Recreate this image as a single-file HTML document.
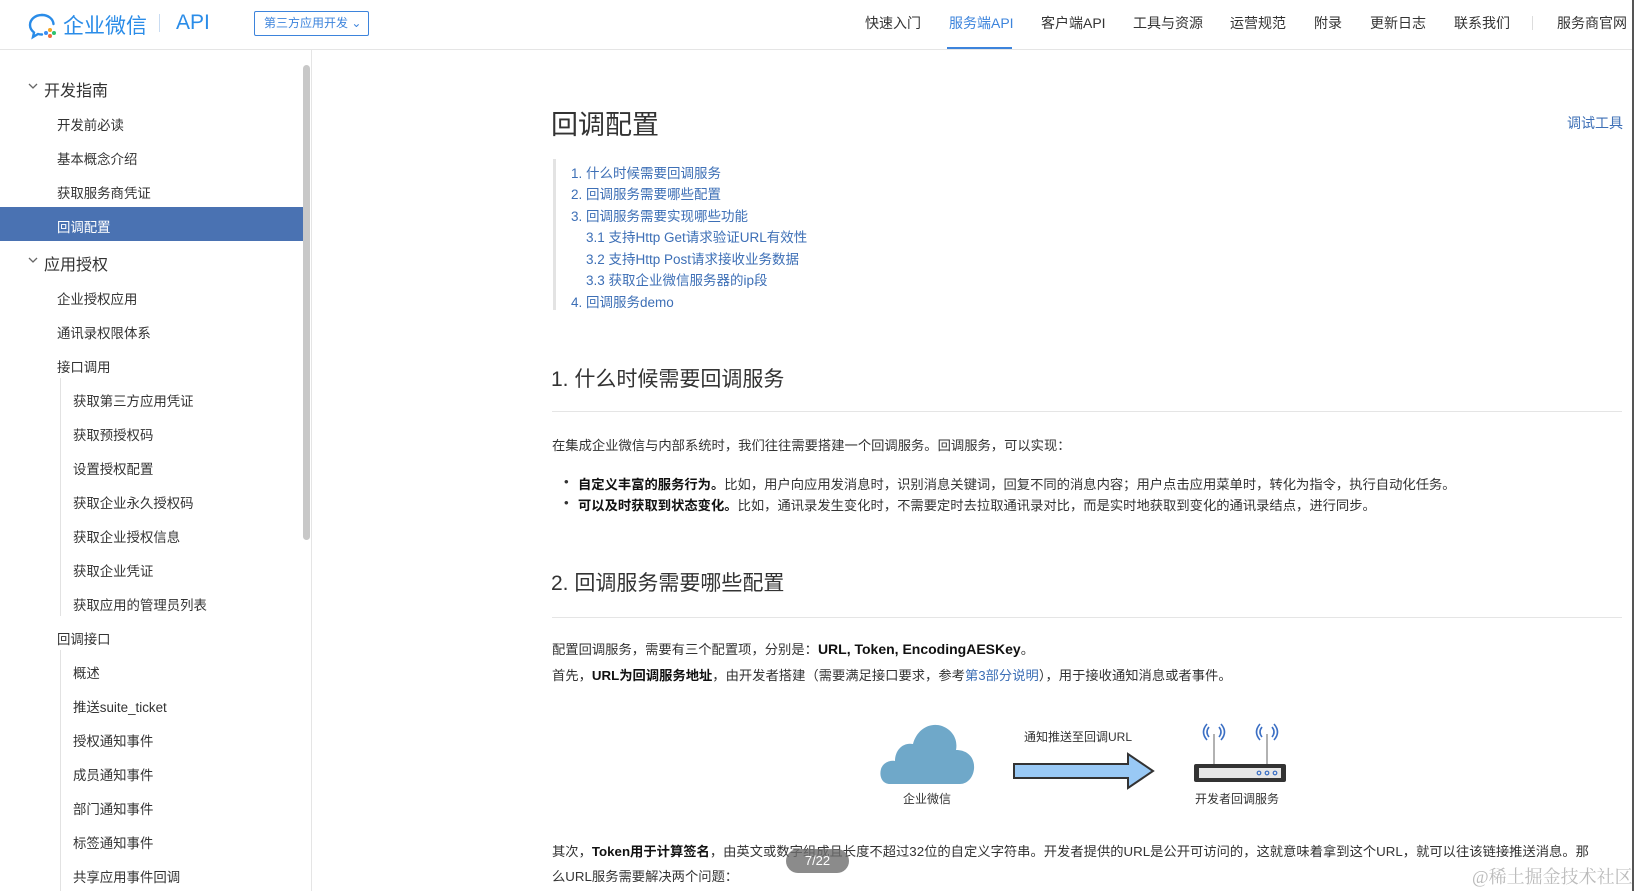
<!DOCTYPE html>
<html><head><meta charset="utf-8"><style>
*{margin:0;padding:0;box-sizing:border-box}
body{width:1638px;height:891px;overflow:hidden;background:#fff;font-family:"Liberation Sans","Noto Sans CJK SC",sans-serif;color:#333;position:relative}
.a{position:absolute;white-space:nowrap}
.nav{top:13px;font-size:14px;color:#333}
.side{font-size:13.4px;color:#333;left:57px}
.sub{left:73px;font-size:13.4px;color:#333}
.toc{font-size:13.5px;color:#3d6fb6}
.p{font-size:13.3px;color:#333;left:552px}
b{color:#111}
</style></head><body>
<!-- header -->
<div class="a" style="left:0;top:49px;width:1632px;height:1px;background:#e5e5e5"></div>
<svg class="a" style="left:28px;top:12px" width="30" height="28" viewBox="0 0 30 28"><path d="M14 3C7 3 2 7.5 2 13c0 3 1.5 5.5 4 7.5L5 25l5-3c1.3.4 2.6.5 4 .5" fill="none" stroke="#2a8ce8" stroke-width="2.4" stroke-linecap="round"/><path d="M14 3c6.5 0 11 4 11.5 9" fill="none" stroke="#2a8ce8" stroke-width="2.4" stroke-linecap="round"/><circle cx="22" cy="18" r="2" fill="#f5a623"/><circle cx="26" cy="21" r="2" fill="#2ec26d"/><circle cx="22" cy="24" r="2" fill="#f06a3a"/><circle cx="18" cy="21" r="2" fill="#3c8df5"/></svg>
<div class="a" style="left:63px;top:10px;font-size:21px;color:#2a8ce8">企业微信</div>
<div class="a" style="left:159px;top:14px;width:1px;height:18px;background:#c9dcf2"></div>
<div class="a" style="left:176px;top:11px;font-size:21px;color:#2a8ce8">API</div>
<div class="a" style="left:254px;top:11px;width:115px;height:25px;border:1px solid #3d84dc;border-radius:2px;font-size:12px;color:#3d84dc;line-height:23px;padding-left:9px">第三方应用开发 ⌄</div>
<div class="a nav" style="left:865px">快速入门</div>
<div class="a nav" style="left:949px;color:#3d84dc">服务端API</div>
<div class="a" style="left:947px;top:47px;width:65px;height:2px;background:#3d84dc"></div>
<div class="a nav" style="left:1041px">客户端API</div>
<div class="a nav" style="left:1133px">工具与资源</div>
<div class="a nav" style="left:1230px">运营规范</div>
<div class="a nav" style="left:1314px">附录</div>
<div class="a nav" style="left:1370px">更新日志</div>
<div class="a nav" style="left:1454px">联系我们</div>
<div class="a" style="left:1532px;top:16px;width:1px;height:14px;background:#ddd"></div>
<div class="a nav" style="left:1557px">服务商官网</div>
<div class="a" style="left:1632px;top:0;width:2px;height:891px;background:#555"></div>
<!-- sidebar -->
<div class="a" style="left:311px;top:50px;width:1px;height:841px;background:#e5e5e5"></div>
<div class="a" style="left:303px;top:65px;width:7px;height:475px;background:#c8c8c8;border-radius:4px"></div>
<div class="a" style="left:0;top:207px;width:303px;height:34px;background:#4a72b2"></div>
<svg class="a" style="left:28px;top:83px" width="10" height="7" viewBox="0 0 10 7"><path d="M1 1l4 4 4-4" fill="none" stroke="#666" stroke-width="1.3"/></svg>
<div class="a" style="left:44px;top:77px;font-size:16px;color:#333">开发指南</div>
<div class="a side" style="top:114px">开发前必读</div>
<div class="a side" style="top:148px">基本概念介绍</div>
<div class="a side" style="top:182px">获取服务商凭证</div>
<div class="a side" style="top:216px;color:#fff">回调配置</div>
<svg class="a" style="left:28px;top:257px" width="10" height="7" viewBox="0 0 10 7"><path d="M1 1l4 4 4-4" fill="none" stroke="#666" stroke-width="1.3"/></svg>
<div class="a" style="left:44px;top:251px;font-size:16px;color:#333">应用授权</div>
<div class="a side" style="top:288px">企业授权应用</div>
<div class="a side" style="top:322px">通讯录权限体系</div>
<div class="a side" style="top:356px">接口调用</div>
<div class="a" style="left:60px;top:378px;width:1px;height:238px;background:#e2e2e2"></div>
<div class="a sub" style="top:390px">获取第三方应用凭证</div>
<div class="a sub" style="top:424px">获取预授权码</div>
<div class="a sub" style="top:458px">设置授权配置</div>
<div class="a sub" style="top:492px">获取企业永久授权码</div>
<div class="a sub" style="top:526px">获取企业授权信息</div>
<div class="a sub" style="top:560px">获取企业凭证</div>
<div class="a sub" style="top:594px">获取应用的管理员列表</div>
<div class="a side" style="top:628px">回调接口</div>
<div class="a" style="left:60px;top:650px;width:1px;height:241px;background:#e2e2e2"></div>
<div class="a sub" style="top:662px">概述</div>
<div class="a sub" style="top:696px">推送suite_ticket</div>
<div class="a sub" style="top:730px">授权通知事件</div>
<div class="a sub" style="top:764px">成员通知事件</div>
<div class="a sub" style="top:798px">部门通知事件</div>
<div class="a sub" style="top:832px">标签通知事件</div>
<div class="a sub" style="top:866px">共享应用事件回调</div>
<!-- content -->
<div class="a" style="left:551px;top:103px;font-size:27px;color:#333">回调配置</div>
<div class="a" style="left:1567px;top:113px;font-size:14px;color:#3d6fb6">调试工具</div>
<div class="a" style="left:553px;top:159px;width:3px;height:151px;background:#e3e3e3"></div>
<div class="a toc" style="left:571px;top:162px">1. 什么时候需要回调服务</div>
<div class="a toc" style="left:571px;top:183px">2. 回调服务需要哪些配置</div>
<div class="a toc" style="left:571px;top:205px">3. 回调服务需要实现哪些功能</div>
<div class="a toc" style="left:586px;top:226px">3.1 支持Http Get请求验证URL有效性</div>
<div class="a toc" style="left:586px;top:248px">3.2 支持Http Post请求接收业务数据</div>
<div class="a toc" style="left:586px;top:269px">3.3 获取企业微信服务器的ip段</div>
<div class="a toc" style="left:571px;top:291px">4. 回调服务demo</div>
<div class="a" style="left:551px;top:363px;font-size:21px;color:#333">1. 什么时候需要回调服务</div>
<div class="a" style="left:552px;top:411px;width:1070px;height:1px;background:#e5e5e5"></div>
<div class="a p" style="top:435px">在集成企业微信与内部系统时，我们往往需要搭建一个回调服务。回调服务，可以实现：</div>
<div class="a p" style="left:564px;top:474px">•</div>
<div class="a p" style="left:578px;top:474px"><b>自定义丰富的服务行为。</b>比如，用户向应用发消息时，识别消息关键词，回复不同的消息内容；用户点击应用菜单时，转化为指令，执行自动化任务。</div>
<div class="a p" style="left:564px;top:495px">•</div>
<div class="a p" style="left:578px;top:495px"><b>可以及时获取到状态变化。</b>比如，通讯录发生变化时，不需要定时去拉取通讯录对比，而是实时地获取到变化的通讯录结点，进行同步。</div>
<div class="a" style="left:551px;top:567px;font-size:21px;color:#333">2. 回调服务需要哪些配置</div>
<div class="a" style="left:552px;top:617px;width:1070px;height:1px;background:#e5e5e5"></div>
<div class="a p" style="top:639px">配置回调服务，需要有三个配置项，分别是：<b style="font-size:14px">URL, Token, EncodingAESKey</b>。</div>
<div class="a p" style="top:665px">首先，<b>URL为回调服务地址</b>，由开发者搭建（需要满足接口要求，参考<span style="color:#3d6fb6">第3部分说明</span>），用于接收通知消息或者事件。</div>
<!-- diagram -->
<svg class="a" style="left:878px;top:720px" width="100" height="66" viewBox="0 0 100 66"><path d="M12 64C4 64 1 56 3 49 5 43 11 40 17 41 17 30 25 22 35 24 39 9 52 2 64 6 75 10 80 20 78 30 90 30 97 38 96 49 95 58 89 64 82 64Z" fill="#6fa8c9"/></svg>
<div class="a" style="left:903px;top:790px;font-size:12px;color:#333">企业微信</div>
<div class="a" style="left:1024px;top:728px;font-size:12px;color:#333">通知推送至回调URL</div>
<svg class="a" style="left:1012px;top:752px" width="144" height="38" viewBox="0 0 144 38"><path d="M2 12H116V2L141 19 116 36V26H2Z" fill="#99c9f5" stroke="#333" stroke-width="2"/></svg>
<svg class="a" style="left:1192px;top:722px" width="96" height="64" viewBox="0 0 96 64"><g fill="none" stroke="#3b6fc4" stroke-width="1.6"><path d="M17 5q-4 5 0 10M15 2q-7 8 0 16M27 5q4 5 0 10M29 2q7 8 0 16"/><path d="M70 5q-4 5 0 10M68 2q-7 8 0 16M80 5q4 5 0 10M82 2q7 8 0 16"/></g><path d="M22 12V42M75 12V42" stroke="#999" stroke-width="1.5"/><rect x="2" y="42" width="92" height="18" rx="2" fill="#333"/><rect x="7" y="46" width="82" height="10" fill="#e6e6e6"/><g fill="none" stroke="#3b6fc4" stroke-width="1.2"><circle cx="67" cy="51" r="1.8"/><circle cx="75" cy="51" r="1.8"/><circle cx="83" cy="51" r="1.8"/></g></svg>
<div class="a" style="left:1195px;top:790px;font-size:12px;color:#333">开发者回调服务</div>
<div class="a p" style="top:841px">其次，<b>Token用于计算签名</b>，由英文或数字组成且长度不超过32位的自定义字符串。开发者提供的URL是公开可访问的，这就意味着拿到这个URL，就可以往该链接推送消息。那</div>
<div class="a p" style="top:866px">么URL服务需要解决两个问题：</div>
<div class="a" style="left:786px;top:849px;width:63px;height:24px;border-radius:12px;background:rgba(110,110,110,.8);color:#fff;font-size:13px;text-align:center;line-height:24px">7/22</div>
<div class="a" style="left:1472px;top:863px;font-size:18px;color:#bbb;font-family:'Liberation Serif','Noto Serif CJK SC',serif">@稀土掘金技术社区</div>
</body></html>
